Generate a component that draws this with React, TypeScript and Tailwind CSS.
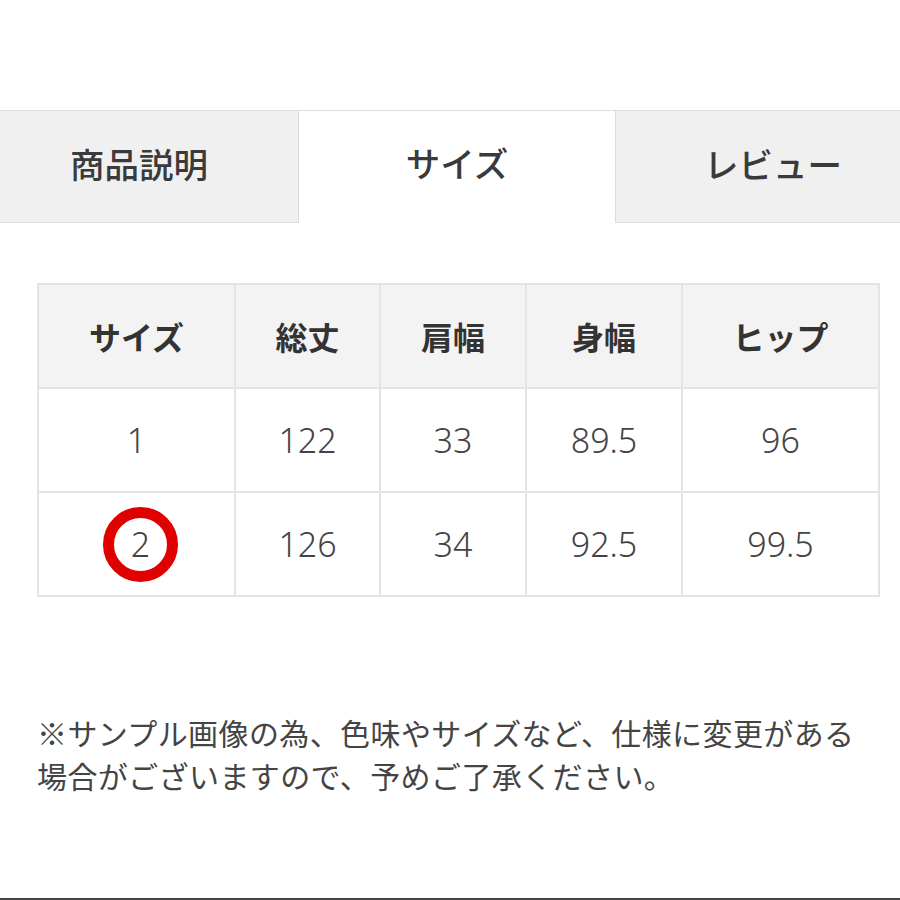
import React from "react";

const headers = ["サイズ", "総丈", "肩幅", "身幅", "ヒップ"];
const rows = [
  ["1", "122", "33", "89.5", "96"],
  ["2", "126", "34", "92.5", "99.5"],
];
const colW = ["w-[197px]", "w-[145px]", "w-[146px]", "w-[156px]", "w-[197px]"];

const font = { fontFamily: '"Noto Sans CJK JP", "Noto Sans", sans-serif' };
const numFont = { fontFamily: '"Noto Sans", "Noto Sans CJK JP", sans-serif' };

export default function App() {
  return (
    <div className="w-[900px] h-[900px] bg-white flex flex-col text-[#3a3a3a]" style={font}>
      {/* tabs */}
      <div className="mt-[110px] flex h-[113px]">
        <div className="w-[299px] bg-[#f0f0f0] border-t border-r border-b border-[#dcdcdc] flex items-center justify-center pr-[20px] pb-[6px] text-[34.5px] font-medium">
          商品説明
        </div>
        <div className="w-[316px] border-t border-[#dcdcdc] flex items-center justify-center text-[34.5px] font-medium pb-[8px]">
          サイズ
        </div>
        <div className="flex-1 bg-[#f0f0f0] border-t border-l border-b border-[#dcdcdc] flex items-center justify-center pl-[30px] pb-[6px] text-[34.5px] font-medium">
          レビュー
        </div>
      </div>

      {/* size table */}
      <table className="ml-[37px] mt-[60px] w-[841px] border-collapse table-fixed">
        <thead>
          <tr className="h-[104px] bg-[#f3f3f3]">
            {headers.map((h, i) => (
              <th key={h} className={`${colW[i]} border-2 border-[#e4e4e4] text-[32px] font-bold text-[#333]`}>
                {h}
              </th>
            ))}
          </tr>
        </thead>
        <tbody>
          {rows.map((r) => (
            <tr key={r[0]} className="h-[104px]">
              {r.map((c, i) => (
                <td key={i} className="border-2 border-[#e4e4e4] text-center text-[34px] font-light text-[#444]" style={numFont}>
                  {i === 0 && c === "2" ? (
                    <span className="inline-flex items-center justify-center w-[75px] h-[75px] rounded-full border-[11px] border-[#e00000] ml-[8px]">
                      {c}
                    </span>
                  ) : (
                    c
                  )}
                </td>
              ))}
            </tr>
          ))}
        </tbody>
      </table>

      {/* note */}
      <p className="ml-[37px] mt-[114px] text-[30px] leading-[43px] text-[#444] tracking-[0.4px]">
        ※サンプル画像の為、色味やサイズなど、仕様に変更がある
        <br />
        場合がございますので、予めご了承ください。
      </p>

      <div className="mt-auto h-[2px] bg-[#444]" />
    </div>
  );
}
